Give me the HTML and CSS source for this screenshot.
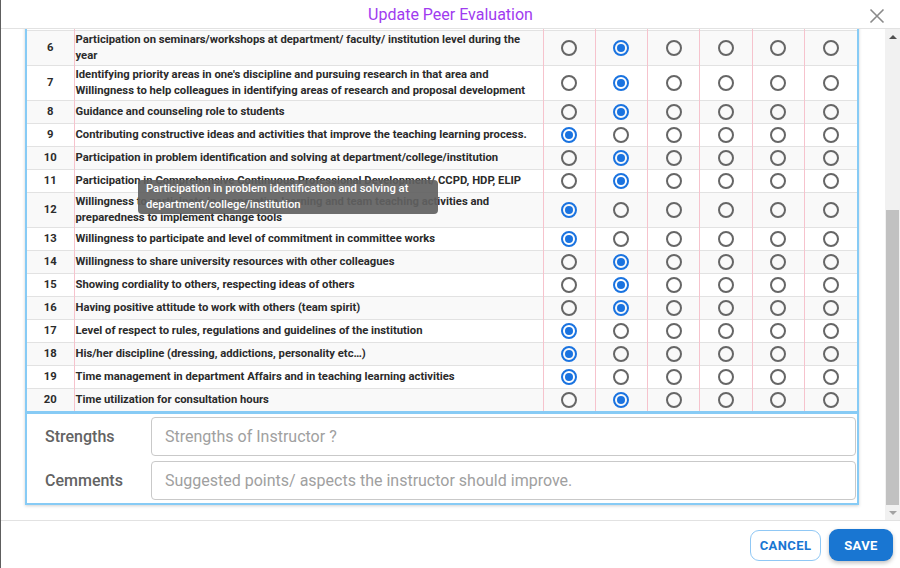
FILE: index.html
```html
<!DOCTYPE html>
<html lang="en">
<head>
<meta charset="utf-8">
<title>Update Peer Evaluation</title>
<link rel="stylesheet" href="styles.css">
</head>
<body>
<div class="modal">
  <header class="modal-header">
    <h2 class="title">Update Peer Evaluation</h2>
    <button class="close" aria-label="Close">
      <svg width="16" height="16" viewBox="0 0 16 16"><path d="M1.5 1.5 L14.5 14.5 M14.5 1.5 L1.5 14.5" stroke="#8a8a8a" stroke-width="1.6" fill="none"/></svg>
    </button>
  </header>
  <div class="modal-body">
    <div class="viewport">
      <div class="card">
        <table class="eval">
          <colgroup><col class="c-no"><col class="c-text"><col><col><col><col><col><col></colgroup>
          <tbody>
            <tr><td class="no"></td><td class="txt"></td><td class="r"><span class="radio"></span></td><td class="r"><span class="radio on"></span></td><td class="r"><span class="radio"></span></td><td class="r"><span class="radio"></span></td><td class="r"><span class="radio"></span></td><td class="r"><span class="radio"></span></td></tr>
            <tr><td class="no">6</td><td class="txt">Participation on seminars/workshops at department/ faculty/ institution level during the year</td><td class="r"><span class="radio"></span></td><td class="r"><span class="radio on"></span></td><td class="r"><span class="radio"></span></td><td class="r"><span class="radio"></span></td><td class="r"><span class="radio"></span></td><td class="r"><span class="radio"></span></td></tr>
            <tr><td class="no">7</td><td class="txt">Identifying priority areas in one's discipline and pursuing research in that area and Willingness to help colleagues in identifying areas of research and proposal development</td><td class="r"><span class="radio"></span></td><td class="r"><span class="radio on"></span></td><td class="r"><span class="radio"></span></td><td class="r"><span class="radio"></span></td><td class="r"><span class="radio"></span></td><td class="r"><span class="radio"></span></td></tr>
            <tr><td class="no">8</td><td class="txt">Guidance and counseling role to students</td><td class="r"><span class="radio"></span></td><td class="r"><span class="radio on"></span></td><td class="r"><span class="radio"></span></td><td class="r"><span class="radio"></span></td><td class="r"><span class="radio"></span></td><td class="r"><span class="radio"></span></td></tr>
            <tr><td class="no">9</td><td class="txt">Contributing constructive ideas and activities that improve the teaching learning process.</td><td class="r"><span class="radio on"></span></td><td class="r"><span class="radio"></span></td><td class="r"><span class="radio"></span></td><td class="r"><span class="radio"></span></td><td class="r"><span class="radio"></span></td><td class="r"><span class="radio"></span></td></tr>
            <tr><td class="no">10</td><td class="txt">Participation in problem identification and solving at department/college/institution</td><td class="r"><span class="radio"></span></td><td class="r"><span class="radio on"></span></td><td class="r"><span class="radio"></span></td><td class="r"><span class="radio"></span></td><td class="r"><span class="radio"></span></td><td class="r"><span class="radio"></span></td></tr>
            <tr><td class="no">11</td><td class="txt">Participation in Comprehensive Continuous Professional Development/ CCPD, HDP, ELIP</td><td class="r"><span class="radio"></span></td><td class="r"><span class="radio on"></span></td><td class="r"><span class="radio"></span></td><td class="r"><span class="radio"></span></td><td class="r"><span class="radio"></span></td><td class="r"><span class="radio"></span></td></tr>
            <tr><td class="no">12</td><td class="txt">Willingness to participate in cooperative learning and team teaching activities and preparedness to implement change tools</td><td class="r"><span class="radio on"></span></td><td class="r"><span class="radio"></span></td><td class="r"><span class="radio"></span></td><td class="r"><span class="radio"></span></td><td class="r"><span class="radio"></span></td><td class="r"><span class="radio"></span></td></tr>
            <tr><td class="no">13</td><td class="txt">Willingness to participate and level of commitment in committee works</td><td class="r"><span class="radio on"></span></td><td class="r"><span class="radio"></span></td><td class="r"><span class="radio"></span></td><td class="r"><span class="radio"></span></td><td class="r"><span class="radio"></span></td><td class="r"><span class="radio"></span></td></tr>
            <tr><td class="no">14</td><td class="txt">Willingness to share university resources with other colleagues</td><td class="r"><span class="radio"></span></td><td class="r"><span class="radio on"></span></td><td class="r"><span class="radio"></span></td><td class="r"><span class="radio"></span></td><td class="r"><span class="radio"></span></td><td class="r"><span class="radio"></span></td></tr>
            <tr><td class="no">15</td><td class="txt">Showing cordiality to others, respecting ideas of others</td><td class="r"><span class="radio"></span></td><td class="r"><span class="radio on"></span></td><td class="r"><span class="radio"></span></td><td class="r"><span class="radio"></span></td><td class="r"><span class="radio"></span></td><td class="r"><span class="radio"></span></td></tr>
            <tr><td class="no">16</td><td class="txt">Having positive attitude to work with others (team spirit)</td><td class="r"><span class="radio"></span></td><td class="r"><span class="radio on"></span></td><td class="r"><span class="radio"></span></td><td class="r"><span class="radio"></span></td><td class="r"><span class="radio"></span></td><td class="r"><span class="radio"></span></td></tr>
            <tr><td class="no">17</td><td class="txt">Level of respect to rules, regulations and guidelines of the institution</td><td class="r"><span class="radio on"></span></td><td class="r"><span class="radio"></span></td><td class="r"><span class="radio"></span></td><td class="r"><span class="radio"></span></td><td class="r"><span class="radio"></span></td><td class="r"><span class="radio"></span></td></tr>
            <tr><td class="no">18</td><td class="txt">His/her discipline (dressing, addictions, personality etc…)</td><td class="r"><span class="radio on"></span></td><td class="r"><span class="radio"></span></td><td class="r"><span class="radio"></span></td><td class="r"><span class="radio"></span></td><td class="r"><span class="radio"></span></td><td class="r"><span class="radio"></span></td></tr>
            <tr><td class="no">19</td><td class="txt">Time management in department Affairs and in teaching learning activities</td><td class="r"><span class="radio on"></span></td><td class="r"><span class="radio"></span></td><td class="r"><span class="radio"></span></td><td class="r"><span class="radio"></span></td><td class="r"><span class="radio"></span></td><td class="r"><span class="radio"></span></td></tr>
            <tr><td class="no">20</td><td class="txt">Time utilization for consultation hours</td><td class="r"><span class="radio"></span></td><td class="r"><span class="radio on"></span></td><td class="r"><span class="radio"></span></td><td class="r"><span class="radio"></span></td><td class="r"><span class="radio"></span></td><td class="r"><span class="radio"></span></td></tr>
          </tbody>
        </table>
        <div class="tooltip">Participation in problem identification and solving at department/college/institution</div>
        <div class="form">
          <div class="field">
            <label class="label" for="strengths">Strengths</label>
            <input class="input" id="strengths" type="text" placeholder="Strengths of Instructor ?">
          </div>
          <div class="field">
            <label class="label" for="comments">Cemments</label>
            <input class="input" id="comments" type="text" placeholder="Suggested points/ aspects the instructor should improve.">
          </div>
        </div>
      </div>
    </div>
    <div class="scrollbar">
      <div class="sb-btn"><span class="tri up"></span></div>
      <div class="sb-track"><div class="sb-thumb"></div></div>
      <div class="sb-btn"><span class="tri down"></span></div>
    </div>
  </div>
  <footer class="modal-footer">
    <button class="btn btn-outline">CANCEL</button>
    <button class="btn btn-primary">SAVE</button>
  </footer>
</div>
</body>
</html>
```

FILE: styles.css
```css
* { box-sizing: border-box; }
html, body { margin: 0; padding: 0; }
body {
  font-family: Roboto, "Noto Sans", "Liberation Sans", sans-serif;
  background: #0b3444;
  width: 900px;
  height: 568px;
  overflow: hidden;
}
.modal {
  width: 900px;
  height: 568px;
  background: #fff;
  border-left: 1px solid #5e5e5e;
  display: flex;
  flex-direction: column;
}
.modal-header {
  height: 29px;
  flex: none;
  border-bottom: 1px solid #e2e2e2;
  position: relative;
  display: flex;
  align-items: center;
  justify-content: center;
}
.title {
  margin: 0;
  font-size: 16px;
  font-weight: 400;
  color: #a03bf0;
  line-height: 20px;
  padding-top: 2px;
}
.close {
  position: absolute;
  right: 14px;
  top: 7px;
  width: 18px;
  height: 18px;
  padding: 1px;
  border: 0;
  background: none;
}
.modal-body {
  flex: 1;
  display: flex;
  min-height: 0;
}
.viewport {
  flex: 1;
  overflow: hidden;
  min-width: 0;
  display: flex;
  flex-direction: column;
  justify-content: flex-end;
  padding-bottom: 15px;
}
.card {
  position: relative;
  flex: none;
  margin: 0 26px 0 24px;
  border: 2px solid #87cbf5;
  border-top: 0;
  box-shadow: 0 1px 3px rgba(0,0,0,0.18);
}
.eval {
  width: 100%;
  table-layout: fixed;
  border-collapse: collapse;
  font-size: 11.25px;
  font-weight: 700;
  color: #2b2b2b;
}
.c-no { width: 47px; }
.c-text { width: 469px; }
.eval tr { border-bottom: 1px solid #e2e2e2; }
.eval tr:last-child { border-bottom: 0; }
.eval tr:nth-child(even) { background: #f9f9f9; }
.eval td {
  border-left: 1px solid #f6c3cd;
  vertical-align: middle;
}
.eval td:first-child { border-left: 0; }
.no {
  text-align: center;
  padding: 1px 0;
  line-height: 16px;
}
.txt {
  padding: 1px 4px 1px 1px;
  line-height: 16px;
}
.r {
  text-align: center;
  padding: 3px 0;
  line-height: 0;
}
.radio {
  display: inline-block;
  width: 16px;
  height: 16px;
  border: 2px solid #666;
  border-radius: 50%;
  position: relative;
}
.radio.on { border-color: #1a73e0; }
.radio.on::after {
  content: "";
  position: absolute;
  left: 2px;
  top: 2px;
  width: 8px;
  height: 8px;
  border-radius: 50%;
  background: #1a73e0;
}
.tooltip {
  position: absolute;
  left: 111px;
  top: 172px;
  width: 300px;
  padding: 1px 8px;
  background: rgba(97, 97, 97, 0.92);
  color: #fff;
  border-radius: 4px;
  font-size: 11.25px;
  font-weight: 500;
  line-height: 16px;
}
.form {
  border-top: 3px solid #87cbf5;
  padding: 3px 1px 3px 18px;
  display: flex;
  flex-direction: column;
  gap: 5px;
}
.field {
  display: flex;
  align-items: center;
}
.label {
  width: 106px;
  flex: none;
  font-size: 16px;
  font-weight: 500;
  color: #636363;
}
.input {
  flex: 1;
  height: 39px;
  border: 1px solid #c9c9c9;
  border-radius: 4px;
  padding: 0 13px;
  font-family: Roboto, "Noto Sans", sans-serif;
  font-size: 16px;
  color: #333;
  background: #fff;
}
.input::placeholder { color: #a0a0a0; }
.scrollbar {
  width: 15px;
  flex: none;
  background: #f1f1f1;
  display: flex;
  flex-direction: column;
}
.sb-btn {
  height: 15px;
  flex: none;
  display: flex;
  align-items: center;
  justify-content: center;
}
.sb-track {
  flex: 1;
  display: flex;
  flex-direction: column;
  justify-content: flex-end;
}
.sb-thumb {
  height: 295px;
  margin: 0 1px 0 1px;
  background: #c1c1c1;
}
.tri {
  width: 0;
  height: 0;
  border-left: 4px solid transparent;
  border-right: 4px solid transparent;
}
.tri.up { border-bottom: 4px solid #505050; }
.tri.down { border-top: 4px solid #a3a3a3; }
.modal-footer {
  height: 48px;
  flex: none;
  border-top: 1px solid #e2e2e2;
  display: flex;
  justify-content: flex-end;
  align-items: flex-start;
  gap: 8px;
  padding: 8px 7px 0 0;
}
.btn {
  font-family: Roboto, "Noto Sans", sans-serif;
  font-size: 13px;
  font-weight: 700;
  letter-spacing: 0.4px;
  border-radius: 9px;
  height: 32px;
  cursor: pointer;
}
.btn-outline {
  width: 71px;
  margin-top: 1px;
  height: 31px;
  background: #fff;
  color: #1976d2;
  border: 1px solid #90c8f5;
}
.btn-primary {
  width: 64px;
  background: #1976d2;
  color: #fff;
  border: 0;
  box-shadow: 0 2px 4px rgba(0,0,0,0.25);
}
```
